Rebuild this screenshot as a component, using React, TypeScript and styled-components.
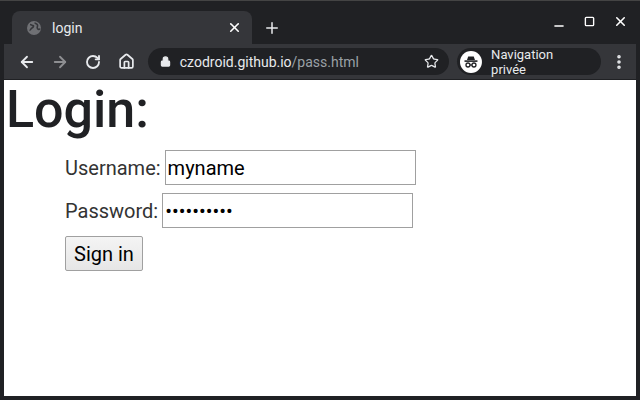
import styled, { createGlobalStyle } from 'styled-components';
import { ArrowLeft, ArrowRight, RotateCw, Home, Lock, Star, X, Plus, Minus, Square, MoreVertical } from 'lucide-react';

const Global = createGlobalStyle`
  html, body { margin: 0; padding: 0; background: #202124; }
  body { font-family: Roboto, "Noto Sans", sans-serif; }
`;

export default function App() {
  return (
    <Frame>
      <Global />
      <TitleBar>
        <Tab>
          <Favicon viewBox="0 0 16 16">
            <circle cx="8" cy="8" r="7" fill="#6f7074" />
            <path d="M4 4.5c1.5 0 2 1 3 1s.5 2-1 2.5-1 2.5-2.5 2M9 2.5c0 1.5 2 1 2.5 2.5s-1 2 0 3.5 2 1 2.5 0" stroke="#35363a" strokeWidth="1.6" fill="none" />
          </Favicon>
          <TabTitle>login</TabTitle>
          <X size={15} color="#fff" strokeWidth={2.6} />
        </Tab>
        <NewTab><Plus size={18} color="#e8eaed" strokeWidth={2} /></NewTab>
        <Spacer />
        <WinBtn><Minus size={14} color="#fff" strokeWidth={2.5} style={{ marginTop: 8 }} /></WinBtn>
        <WinBtn><Square size={11} color="#fff" strokeWidth={3} /></WinBtn>
        <WinBtn><X size={15} color="#fff" strokeWidth={2.5} /></WinBtn>
      </TitleBar>
      <Toolbar>
        <NavBtn><ArrowLeft size={18} color="#e8eaed" strokeWidth={2.4} /></NavBtn>
        <NavBtn><ArrowRight size={18} color="#8e8f92" strokeWidth={2.4} /></NavBtn>
        <NavBtn><RotateCw size={16} color="#e8eaed" strokeWidth={2.8} /></NavBtn>
        <NavBtn><Home size={17} color="#e8eaed" strokeWidth={2.4} /></NavBtn>
        <Omnibox>
          <Lock size={11} color="#e8eaed" fill="#e8eaed" strokeWidth={2.5} />
          <Url>czodroid.github.io<UrlPath>/pass.html</UrlPath></Url>
          <Star size={15} color="#e8eaed" strokeWidth={2} />
        </Omnibox>
        <Incognito>
          <IncIcon viewBox="0 0 22 22">
            <circle cx="11" cy="11" r="11" fill="#fff" />
            <path d="M7 9l1.2-3.5h5.6L15 9z" fill="#202124" />
            <rect x="4.5" y="9.3" width="13" height="1.6" fill="#202124" />
            <circle cx="8" cy="14" r="2" stroke="#202124" strokeWidth="1.3" fill="none" />
            <circle cx="14" cy="14" r="2" stroke="#202124" strokeWidth="1.3" fill="none" />
            <path d="M10 14h2" stroke="#202124" strokeWidth="1.2" />
          </IncIcon>
          <IncLabel>Navigation privée</IncLabel>
        </Incognito>
        <NavBtn><MoreVertical size={18} color="#e8eaed" strokeWidth={2.8} /></NavBtn>
      </Toolbar>
      <Page>
        <Heading>Login:</Heading>
        <Form>
          <Row>
            <Label>Username:</Label>
            <Field defaultValue="myname" />
          </Row>
          <Row>
            <Label>Password:</Label>
            <Field type="password" defaultValue="abcdefghij" />
          </Row>
          <Row>
            <SignIn>Sign in</SignIn>
          </Row>
        </Form>
      </Page>
    </Frame>
  );
}

const Frame = styled.div`
  width: 640px;
  height: 400px;
  background: #202124;
  display: flex;
  flex-direction: column;
  box-sizing: border-box;
  padding: 0 4px 4px 4px;
  border-top: 1px solid #444;
`;

const TitleBar = styled.div`
  height: 43px;
  display: flex;
  align-items: flex-end;
  padding-left: 8px;
`;

const Tab = styled.div`
  width: 240px;
  height: 33px;
  background: #35363a;
  border-radius: 8px 8px 0 0;
  display: flex;
  align-items: center;
  padding: 0 10px 0 14px;
  box-sizing: border-box;
  gap: 10px;
`;

const Favicon = styled.svg`
  width: 16px;
  height: 16px;
`;

const TabTitle = styled.span`
  flex: 1;
  color: #e8eaed;
  font-size: 14px;
`;

const NewTab = styled.div`
  width: 40px;
  height: 33px;
  display: flex;
  align-items: center;
  justify-content: center;
`;

const Spacer = styled.div`
  flex: 1;
`;

const WinBtn = styled.div`
  width: 31px;
  height: 43px;
  display: flex;
  align-items: center;
  justify-content: center;
  padding-bottom: 2px;
  box-sizing: border-box;
`;

const Toolbar = styled.div`
  height: 35px;
  background: #35363a;
  display: flex;
  align-items: center;
  padding: 0 2px 0 8px;
  gap: 2px;
`;

const NavBtn = styled.div`
  width: 31px;
  height: 30px;
  display: flex;
  align-items: center;
  justify-content: center;
`;

const Omnibox = styled.div`
  margin-left: 4px;
  width: 302px;
  height: 27px;
  border-radius: 14px;
  background: #202124;
  display: flex;
  align-items: center;
  padding: 0 10px 0 12px;
  box-sizing: border-box;
  gap: 9px;
`;

const Url = styled.span`
  flex: 1;
  color: #e8eaed;
  font-size: 14px;
`;

const UrlPath = styled.span`
  color: #9aa0a6;
`;

const Incognito = styled.div`
  margin-left: 6px;
  height: 27px;
  border-radius: 14px;
  background: #202124;
  display: flex;
  align-items: center;
  padding: 0 10px 0 3px;
  gap: 9px;
`;

const IncIcon = styled.svg`
  width: 22px;
  height: 22px;
`;

const IncLabel = styled.span`
  color: #e8eaed;
  font-size: 13px;
`;

const Page = styled.div`
  flex: 1;
  background: #fff;
  margin-top: 1px;
`;

const Heading = styled.h1`
  margin: 0;
  padding-left: 2px;
  font-size: 52px;
  line-height: 59px;
  font-weight: 500;
  color: #202124;
`;

const Form = styled.div`
  padding: 11px 0 0 61px;
  display: flex;
  flex-direction: column;
  gap: 8px;
`;

const Row = styled.div`
  display: flex;
  align-items: center;
  gap: 4px;
`;

const Label = styled.span`
  font-size: 20px;
  color: #333;
`;

const Field = styled.input`
  width: 251px;
  height: 35px;
  box-sizing: border-box;
  border: 1px solid #a0a0a0;
  font-family: Roboto, sans-serif;
  font-size: 20px;
  padding: 0 2px;
  color: #000;
  outline: none;
`;

const SignIn = styled.button`
  height: 35px;
  padding: 0 8px;
  font-family: Roboto, sans-serif;
  font-size: 20px;
  color: #000;
  border: 1px solid #a0a0a0;
  border-radius: 2px;
  background: linear-gradient(#f4f4f4, #e6e6e6);
`;
